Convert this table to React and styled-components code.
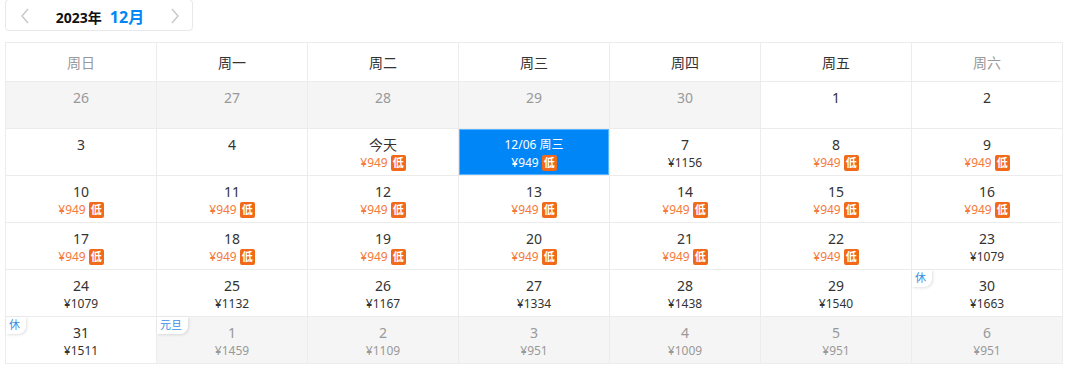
import React from 'react'
import styled, { createGlobalStyle } from 'styled-components'

const Global = createGlobalStyle`
  body {
    margin: 0;
    background: #fff;
    font-family: "Noto Sans", "Noto Sans CJK SC", sans-serif;
    color: #333;
  }
`

const Page = styled.div`
  padding: 0 0 0 5px;
`

const MonthBar = styled.div`
  width: 188px;
  height: 32px;
  margin-top: -1px;
  border: 1px solid #e8e8e8;
  border-radius: 4px;
  display: flex;
  align-items: center;
  justify-content: space-between;
  padding: 1px 12px 0 14px;
  box-sizing: border-box;
`

const Arrow = styled.span`
  color: #c8c8c8;
  display: flex;
  align-items: center;
`

const Title = styled.div`
  display: flex;
  align-items: baseline;
  gap: 8px;
  font-weight: bold;
  font-size: 14px;
  color: #111;
`

const Month = styled.span`
  color: #0086f6;
  font-size: 16px;
`

const Grid = styled.div`
  margin-top: 11px;
  width: 1058px;
  display: grid;
  grid-template-columns: repeat(7, 151px);
  border-top: 1px solid #ececec;
  border-left: 1px solid #ececec;
  box-sizing: border-box;
`

const Head = styled.div`
  height: 38px;
  border-right: 1px solid #ececec;
  border-bottom: 1px solid #ececec;
  display: flex;
  align-items: center;
  justify-content: center;
  font-size: 14px;
  color: ${p => (p.$weekend ? '#999' : '#333')};
`

const Cell = styled.div`
  position: relative;
  height: 47px;
  border-right: 1px solid #ececec;
  border-bottom: 1px solid #ececec;
  background: ${p => (p.$active ? '#0086f6' : p.$other ? '#f5f5f5' : '#fff')};
  box-shadow: ${p => (p.$active ? 'inset 0 0 0 1px #57b4ff' : 'none')};
  display: flex;
  flex-direction: column;
  align-items: center;
  padding-top: 6px;
  box-sizing: border-box;
  color: ${p => (p.$active ? '#fff' : p.$other ? '#999' : '#333')};
`

const Day = styled.div`
  font-size: ${p => (p.$small ? '12px' : '14px')};
  line-height: 20px;
`

const Price = styled.div`
  display: flex;
  align-items: center;
  gap: 3px;
  font-size: 12px;
  line-height: 16px;
  color: ${p => (p.$active ? '#fff' : p.$low ? '#f5793b' : p.$other ? '#999' : '#333')};
`

const Low = styled.span`
  display: inline-flex;
  align-items: center;
  justify-content: center;
  width: 15px;
  height: 16px;
  border-radius: 2px;
  background: #f06a1a;
  color: #fff;
  font-size: 11px;
  font-weight: bold;
`

const Tag = styled.span`
  position: absolute;
  left: 0;
  top: 0;
  padding: 0 6px 1px 3px;
  font-size: 11px;
  line-height: 16px;
  color: #3a8ee6;
  background: #fff;
  border-bottom-right-radius: 8px;
  box-shadow: 1px 1px 3px rgba(0, 0, 0, 0.12);
`

const weeks = ['周日', '周一', '周二', '周三', '周四', '周五', '周六']

const days = [
  { d: '26', other: true }, { d: '27', other: true }, { d: '28', other: true },
  { d: '29', other: true }, { d: '30', other: true }, { d: '1' }, { d: '2' },
  { d: '3' }, { d: '4' }, { d: '今天', p: '949', low: true },
  { d: '12/06 周三', p: '949', low: true, active: true },
  { d: '7', p: '1156' }, { d: '8', p: '949', low: true }, { d: '9', p: '949', low: true },
  { d: '10', p: '949', low: true }, { d: '11', p: '949', low: true }, { d: '12', p: '949', low: true },
  { d: '13', p: '949', low: true }, { d: '14', p: '949', low: true }, { d: '15', p: '949', low: true },
  { d: '16', p: '949', low: true },
  { d: '17', p: '949', low: true }, { d: '18', p: '949', low: true }, { d: '19', p: '949', low: true },
  { d: '20', p: '949', low: true }, { d: '21', p: '949', low: true }, { d: '22', p: '949', low: true },
  { d: '23', p: '1079' },
  { d: '24', p: '1079' }, { d: '25', p: '1132' }, { d: '26', p: '1167' }, { d: '27', p: '1334' },
  { d: '28', p: '1438' }, { d: '29', p: '1540' }, { d: '30', p: '1663', tag: '休' },
  { d: '31', p: '1511', tag: '休' }, { d: '1', p: '1459', other: true, tag: '元旦' },
  { d: '2', p: '1109', other: true }, { d: '3', p: '951', other: true },
  { d: '4', p: '1009', other: true }, { d: '5', p: '951', other: true }, { d: '6', p: '951', other: true },
]

const Chevron = ({ left }) => (
  <svg width="10" height="16" viewBox="0 0 10 16">
    <path d={left ? 'M8 1 L2 8 L8 15' : 'M2 1 L8 8 L2 15'} fill="none" stroke="currentColor" strokeWidth="1.4" />
  </svg>
)

export default function App() {
  return (
    <Page>
      <Global />
      <MonthBar>
        <Arrow><Chevron left /></Arrow>
        <Title>2023年<Month>12月</Month></Title>
        <Arrow><Chevron /></Arrow>
      </MonthBar>
      <Grid>
        {weeks.map((w, i) => (
          <Head key={w} $weekend={i === 0 || i === 6}>{w}</Head>
        ))}
        {days.map((c, i) => (
          <Cell key={i} $other={c.other} $active={c.active}>
            {c.tag && <Tag>{c.tag}</Tag>}
            <Day $small={c.active}>{c.d}</Day>
            {c.p && (
              <Price $low={c.low} $other={c.other} $active={c.active}>
                ¥{c.p}{c.low && <Low>低</Low>}
              </Price>
            )}
          </Cell>
        ))}
      </Grid>
    </Page>
  )
}
